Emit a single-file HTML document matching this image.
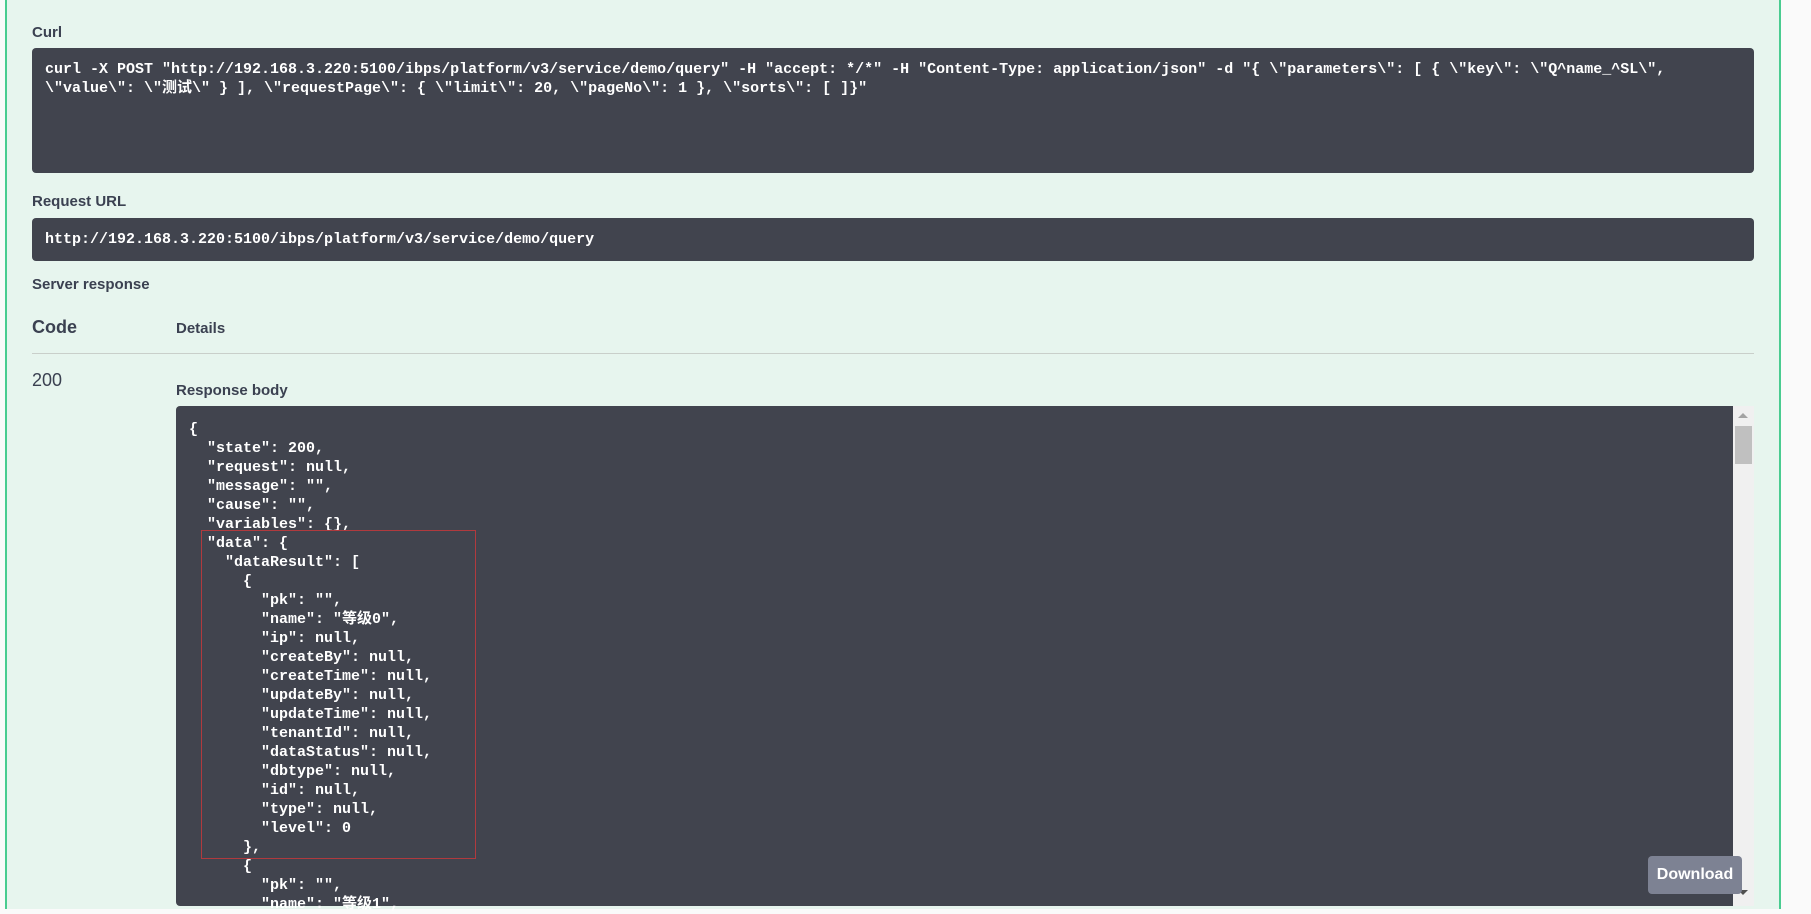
<!DOCTYPE html>
<html><head><meta charset="utf-8"><style>
body{margin:0;width:1811px;height:909px;overflow:hidden;background:#fafafa;font-family:"Liberation Sans","Noto Sans CJK SC",sans-serif;position:relative}
.panel{position:absolute;left:5px;top:0;width:1772px;height:909px;background:#e7f5ee;border-left:2px solid #49cc90;border-right:2px solid #49cc90}
.lbl{position:absolute;font-weight:bold;font-size:15px;color:#3b4151}
.box{position:absolute;background:#41444e;border-radius:4px}
pre,.mono{font-family:"Liberation Mono","Noto Sans CJK SC",monospace;font-size:15px;font-weight:bold;color:#fff;margin:0;white-space:pre}
</style></head><body>
<div class="panel"></div>
<div class="lbl" style="left:32px;top:24px">Curl</div>
<div class="box" style="left:32px;top:48px;width:1722px;height:125px">
<pre style="position:absolute;left:13px;top:12px;line-height:19px">curl -X POST "http://192.168.3.220:5100/ibps/platform/v3/service/demo/query" -H "accept: */*" -H "Content-Type: application/json" -d "{ \"parameters\": [ { \"key\": \"Q^name_^SL\",
\"value\": \"测试\" } ], \"requestPage\": { \"limit\": 20, \"pageNo\": 1 }, \"sorts\": [ ]}"</pre></div>
<div class="lbl" style="left:32px;top:193px">Request URL</div>
<div class="box" style="left:32px;top:218px;width:1722px;height:43px">
<pre style="position:absolute;left:13px;top:13px">http://192.168.3.220:5100/ibps/platform/v3/service/demo/query</pre></div>
<div class="lbl" style="left:32px;top:276px">Server response</div>
<div class="lbl" style="left:32px;top:317px;font-size:18px">Code</div>
<div class="lbl" style="left:176px;top:320px">Details</div>
<div style="position:absolute;left:32px;top:353px;width:1722px;height:1px;background:#c9cfca"></div>
<div style="position:absolute;left:32px;top:370px;font-size:18px;color:#3b4151">200</div>
<div class="lbl" style="left:176px;top:382px">Response body</div>
<div class="box" style="left:176px;top:406px;width:1557px;height:500px;border-radius:4px 0 0 4px">
<pre style="position:absolute;left:13px;top:14px;line-height:19px">{
  "state": 200,
  "request": null,
  "message": "",
  "cause": "",
  "variables": {},
  "data": {
    "dataResult": [
      {
        "pk": "",
        "name": "等级0",
        "ip": null,
        "createBy": null,
        "createTime": null,
        "updateBy": null,
        "updateTime": null,
        "tenantId": null,
        "dataStatus": null,
        "dbtype": null,
        "id": null,
        "type": null,
        "level": 0
      },
      {
        "pk": "",
        "name": "等级1",</pre></div>
<div style="position:absolute;left:201px;top:530px;width:273px;height:327px;border:1.5px solid #b03a3e"></div>
<div style="position:absolute;left:1733px;top:406px;width:21px;height:500px;background:#f0f0f0"></div>
<div style="position:absolute;left:1735px;top:426px;width:17px;height:38px;background:#c0c0c0"></div>
<div style="position:absolute;left:1738px;top:413px;width:0;height:0;border-left:5px solid transparent;border-right:5px solid transparent;border-bottom:5px solid #a3a3a3"></div>
<div style="position:absolute;left:1738px;top:890px;width:0;height:0;border-left:5px solid transparent;border-right:5px solid transparent;border-top:5px solid #505050"></div>
<div style="position:absolute;left:1648px;top:856px;width:94px;height:38px;background:#7d8293;border-radius:4px;color:#fff;font-weight:bold;font-size:16px;line-height:38px;text-align:center">Download</div>
</body></html>
